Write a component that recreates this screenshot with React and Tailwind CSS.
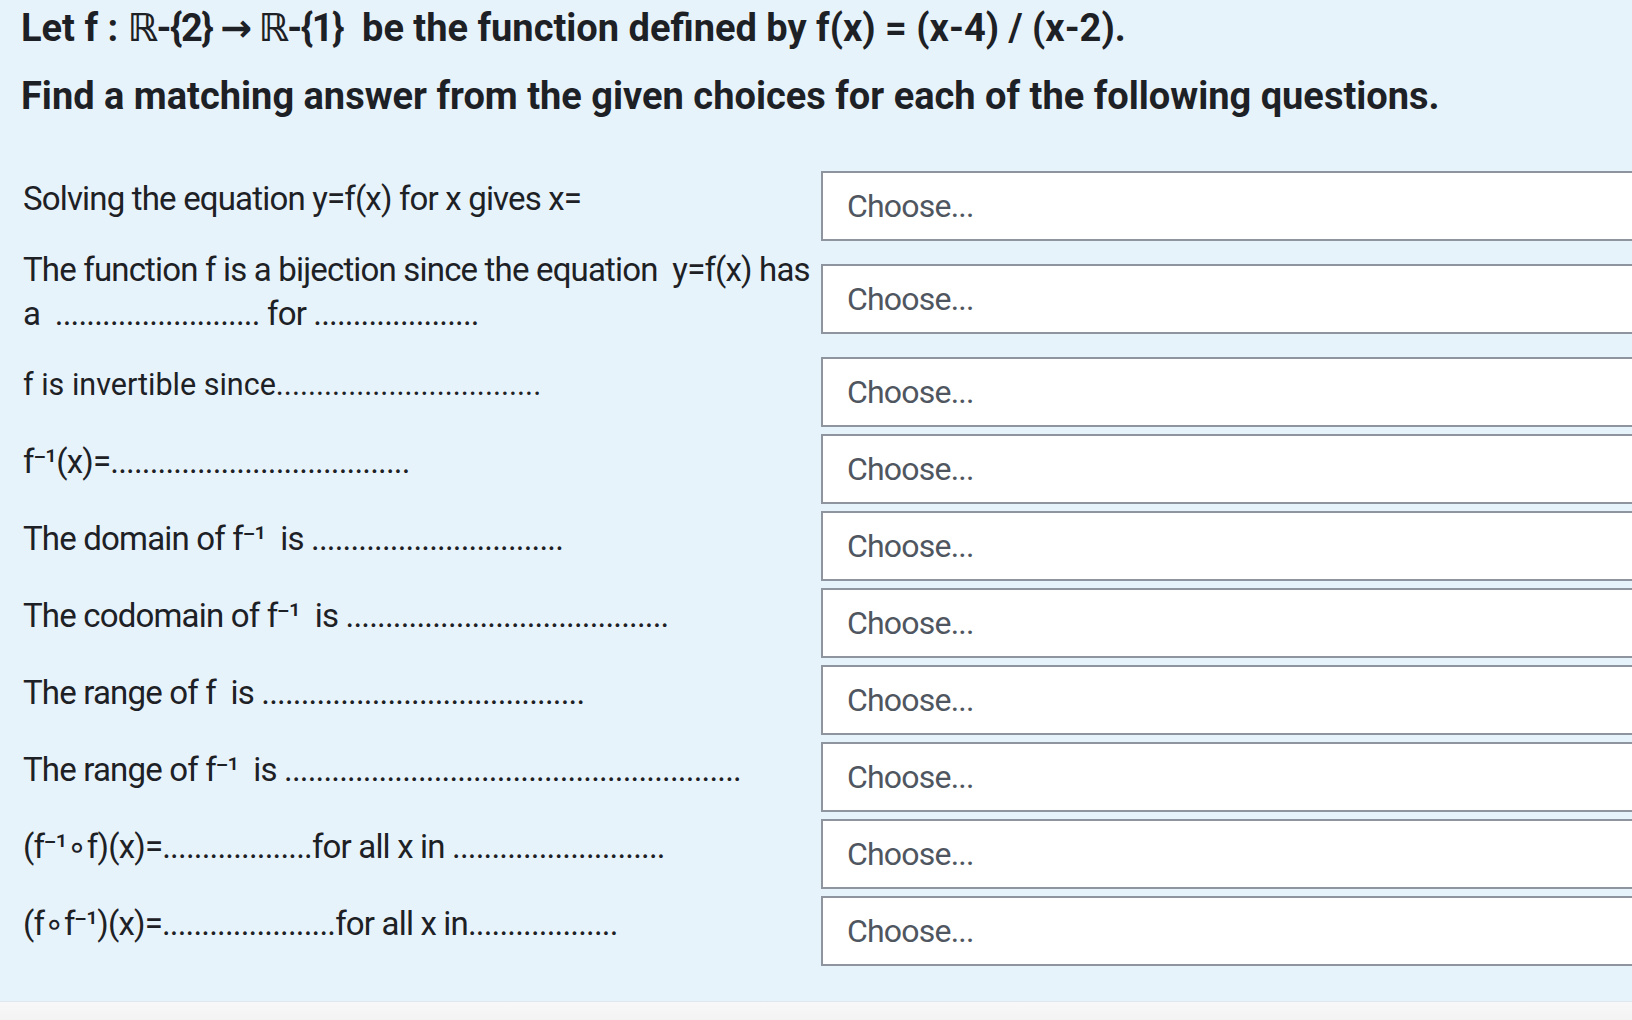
import React from 'react';

const dots = (n) => '.'.repeat(n);

const rows = [
  { lines: ['Solving the equation y=f(x) for x gives x='] },
  {
    lines: [
      'The function f is a bijection since the equation  y=f(x) has',
      `a  ${dots(26)} for ${dots(21)}`,
    ],
  },
  { lines: [`f is invertible since${dots(33)}`], plain: true },
  { lines: [`f⁻¹(x)=${dots(38)}`] },
  { lines: [`The domain of f⁻¹  is ${dots(32)}`] },
  { lines: [`The codomain of f⁻¹  is ${dots(41)}`] },
  { lines: [`The range of f  is ${dots(41)}`] },
  { lines: [`The range of f⁻¹  is ${dots(58)}`] },
  { lines: [`(f⁻¹∘f)(x)=${dots(19)}for all x in ${dots(27)}`] },
  { lines: [`(f∘f⁻¹)(x)=${dots(22)}for all x in${dots(19)}`] },
];

const Select = () => (
  <div className="w-[900px] shrink-0 h-[70px] bg-white border-2 border-[#8f959e] flex items-center pl-[24px]">
    <span className="text-[32px] tracking-[-0.025em] text-[#4f5660]">Choose...</span>
  </div>
);

const Row = ({ lines, plain }) => (
  <div className="flex items-center">
    <div
      className={
        'w-[821px] shrink-0 pl-[23px] pb-[14px] leading-[44px] text-[#1d2125] whitespace-pre ' +
        (plain ? 'text-[30.5px]' : 'text-[33px] tracking-[-0.025em]')
      }
    >
      {lines.map((l, i) => (
        <div key={i}>{l}</div>
      ))}
    </div>
    <Select />
  </div>
);

export default function App() {
  return (
    <div className="w-[1632px] h-[1020px] overflow-hidden flex flex-col" style={{ fontFamily: 'Roboto, "DejaVu Sans", sans-serif' }}>
      <div className="bg-[#e7f3fa] pt-[8px] pb-[35px] pl-[21px]">
        <h1 className="text-[38px] font-bold leading-[40px] text-[#1d2125] whitespace-pre">
          Let f : <span className="tracking-[-0.04em]">ℝ-{'{2}'} → ℝ-{'{1}'}</span>  be the function defined by f(x) = (x-4) / (x-2).
        </h1>
        <h2 className="mt-[28px] text-[38px] font-bold leading-[40px] text-[#1d2125]">
          Find a matching answer from the given choices for each of the following questions.
        </h2>
        <div className="mt-[55px] -ml-[21px] flex flex-col gap-[7px]">
          {rows.map((r, i) => (
            <Row key={i} {...r} />
          ))}
        </div>
      </div>
      <div className="flex-1 bg-gradient-to-b from-[#f8f8f8] to-[#f3f3f3] border-t border-[#dfe8ed]" />
    </div>
  );
}
